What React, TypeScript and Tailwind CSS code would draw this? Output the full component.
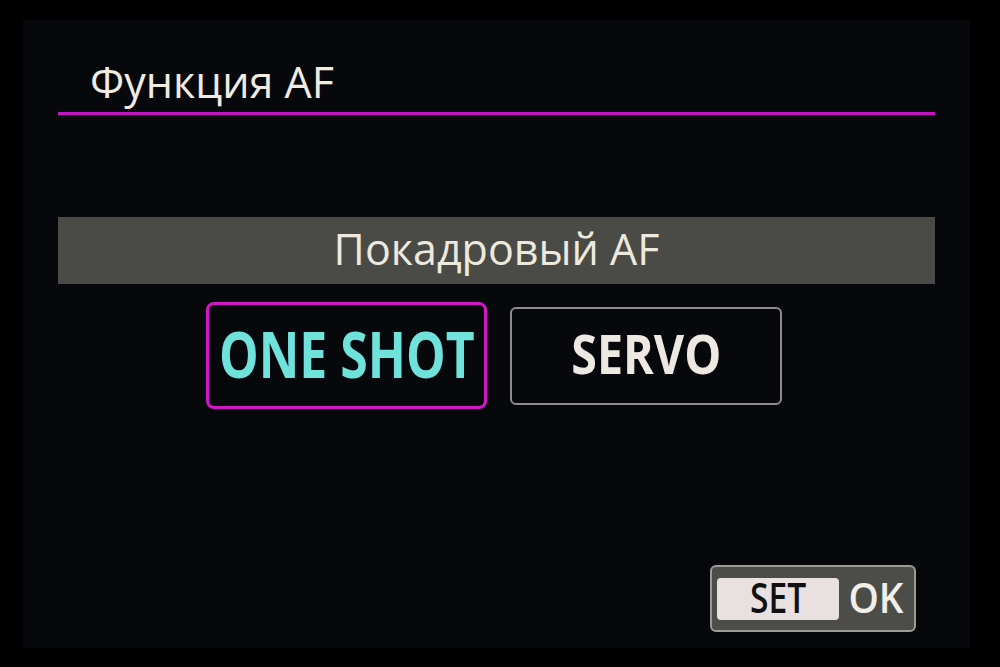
import { useState } from 'react';

const modes = [
    { id: 'one', label: 'ONE SHOT' },
    { id: 'servo', label: 'SERVO' },
];

const App = () => {
    const [selected, setSelected] = useState('one');

    return (
        <div className="w-[1000px] h-[667px] bg-black pl-[23px] pr-[30px] pt-[20px] pb-[19px] font-['Open_Sans',sans-serif]">
            <div className="h-full bg-[#07080c] flex flex-col px-[35px]">
                {/* Header */}
                <h1 className="pt-[40px] pl-[32px] text-[43px] leading-none text-[#f1ece2]">Функция AF</h1>
                <div className="mt-[9px] h-[3px] bg-[#c414c4]"></div>

                {/* Current mode */}
                <div className="mt-[102px] h-[67px] bg-[#4a4b46] flex items-center justify-center">
                    <span className="text-[43px] leading-none text-[#eee9df] -mt-[4px]">Покадровый AF</span>
                </div>

                {/* Mode options */}
                <div className="mt-[18px] flex items-center justify-center gap-[23px] -ml-[5px]">
                    {modes.map((m) => {
                        const active = selected === m.id;
                        return (
                            <button
                                key={m.id}
                                onClick={() => setSelected(m.id)}
                                className={
                                    active
                                        ? 'w-[281px] h-[107px] rounded-[8px] border-[3px] border-[#d316c8] flex items-center justify-center'
                                        : 'w-[272px] h-[98px] rounded-[6px] border-2 border-[#8c8c88] flex items-center justify-center'
                                }
                            >
                                <span
                                    className={
                                        active
                                            ? 'inline-block whitespace-nowrap font-bold text-[64px] leading-none text-[#70e2dc] scale-x-[0.78] -mt-[4px]'
                                            : 'inline-block whitespace-nowrap font-bold text-[53px] leading-none text-[#eee8e2] scale-x-[0.88] -mt-[4px]'
                                    }
                                >
                                    {m.label}
                                </span>
                            </button>
                        );
                    })}
                </div>

                {/* SET OK */}
                <div className="mt-auto pb-[16px] pr-[19px] flex justify-end">
                    <div className="w-[206px] h-[67px] rounded-[6px] border-2 border-[#9c9c96] bg-[#4c4d48] flex items-center pl-[5px] gap-[7px]">
                        <div className="w-[122px] h-[42px] rounded-[4px] bg-[#e9e1e1] flex items-center justify-center">
                            <span className="inline-block font-semibold text-[42px] leading-none text-[#111] scale-x-[0.8] -mt-[3px]">SET</span>
                        </div>
                        <span className="inline-block font-semibold text-[42px] leading-none text-[#f2eeea] scale-x-[0.92] -mt-[3px]">OK</span>
                    </div>
                </div>
            </div>
        </div>
    );
};

export default App;
